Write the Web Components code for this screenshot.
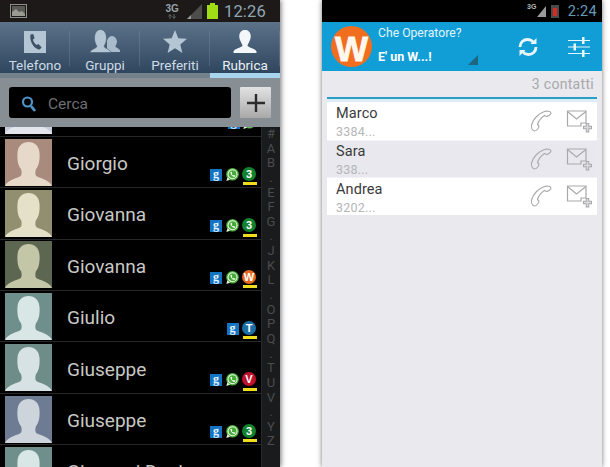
<!DOCTYPE html>
<html>
<head>
<meta charset="utf-8">
<style>
  html, body { margin: 0; height: 467px; overflow: hidden; background: #fff; font-family: Roboto, "Liberation Sans", sans-serif; }
  .page { display: flex; gap: 42px; height: 467px; }
</style>
</head>
<body>
<div class="page">
  <samsung-phone>
    <samsung-tab label="Telefono" icon="phone"></samsung-tab>
    <samsung-tab label="Gruppi" icon="group"></samsung-tab>
    <samsung-tab label="Preferiti" icon="star"></samsung-tab>
    <samsung-tab label="Rubrica" icon="person" active></samsung-tab>
    <contact-row slot="rows" name="" bg="#c9ccdc" fg="#e4e6ee" badges="g,wa"></contact-row>
    <contact-row slot="rows" name="Giorgio" bg="#a98b7d" fg="#e6d9ca" badges="g,wa,3"></contact-row>
    <contact-row slot="rows" name="Giovanna" bg="#928e70" fg="#e5e0c8" badges="g,wa,3"></contact-row>
    <contact-row slot="rows" name="Giovanna" bg="#5d6650" fg="#c4c6a8" badges="g,wa,W"></contact-row>
    <contact-row slot="rows" name="Giulio" bg="#6f8f8d" fg="#d8e6e6" badges="g,T"></contact-row>
    <contact-row slot="rows" name="Giuseppe" bg="#6e8c88" fg="#d6e2e4" badges="g,wa,V"></contact-row>
    <contact-row slot="rows" name="Giuseppe" bg="#6d7c92" fg="#ced4dc" badges="g,wa,3"></contact-row>
    <contact-row slot="rows" name="Giovanni Dani" bg="#6f8f8d" fg="#d8e6e6" badges=""></contact-row>
  </samsung-phone>
  <wo-phone>
    <wo-contact name="Marco" num="3384..."></wo-contact>
    <wo-contact name="Sara" num="338..." alt></wo-contact>
    <wo-contact name="Andrea" num="3202..."></wo-contact>
  </wo-phone>
</div>

<script>
const TAB_ICONS = {
  phone: `<svg width="22" height="22" viewBox="0 0 22 22"><rect width="22" height="22" fill="#b4c5d3"/><path d="M6.5 3.5 L9.2 3 L10.6 7.2 L8.9 8.6 C9.3 10.6 10.6 12.6 12.4 14 L14.3 13 L17.6 16.2 L15.8 18.6 C11.4 18.8 5 11.6 6.5 3.5Z" fill="#3c5165"/></svg>`,
  group: `<svg width="30" height="24" viewBox="0 0 30 24"><path d="M17 12.5c0-2 2-5.500 5-5.500s5 3.500 5 5.500c0 2.500-1.500 4-1.700 5 .3 1 3.700 1.500 4.700 4v1.500H17z" fill="#a9bccb"/><path d="M0 23.500c.5-3.500 5.500-3.500 7-6-.2-1-2.500-3.500-2.500-8.500C4.500 4 7 .5 10.500.5S16.500 4 16.500 9c0 5-2.300 7.500-2.500 8.500 1.500 2.500 6 2.500 7 6z" fill="#b4c5d3" stroke="#465c72" stroke-width=".6"/></svg>`,
  star: `<svg width="24" height="23" viewBox="0 0 24 23"><path d="M12 0l3.300 8.200 8.700.6-6.700 5.600 2.100 8.600L12 18.300 4.600 23l2.100-8.600L0 8.800l8.700-.6z" fill="#b4c5d3"/></svg>`,
  person: `<svg width="24" height="23" viewBox="0 0 24 23"><path d="M.5 23V21.500C1 19 7 18 9.500 16C9.500 14.500 8 12.500 7 10C6.300 8 6.200 7 6.300 5.500C6.500 2 9 0 12 0S17.500 2 17.700 5.500C17.800 7 17.700 8 17 10C16 12.500 14.500 14.500 14.500 16C17 18 23 19 23.500 21.500V23Z" fill="#f4f7f9"/></svg>`
};

class SamsungTab extends HTMLElement {
  constructor() {
    super();
    this.attachShadow({ mode: 'open' });
    this.shadowRoot.innerHTML = `
      <style>
        :host { flex: 1; display: flex; flex-direction: column; align-items: center; height: 51px; position: relative; font-size: 13.500px; color: #cfdbe4; }
        :host([active]) { color: #e8f0f5; }
        :host(:not(:last-child))::after { content: ""; position: absolute; right: 0; top: 9px; bottom: 7px; width: 1px; background: rgba(130,155,178,.3); }
        .icon { height: 30px; display: flex; align-items: flex-end; margin-top: 1px; }
        .label { margin-top: 4px; line-height: 16px; }
        svg { display: block; }
      </style>
      <div class="icon">${TAB_ICONS[this.getAttribute('icon')]}</div>
      <div class="label">${this.getAttribute('label')}</div>`;
  }
}
customElements.define('samsung-tab', SamsungTab);

class OpBadge extends HTMLElement {
  constructor() {
    super();
    this.attachShadow({ mode: 'open' });
    const kind = this.getAttribute('kind');
    const colors = { 3: '#12822e', W: '#e4681e', T: '#1b6ea6', V: '#c0122c' };
    let inner;
    if (kind === 'g') {
      inner = `<div class="g">g</div>`;
    } else if (kind === 'wa') {
      inner = `<svg width="13" height="13" viewBox="0 0 13 13"><circle cx="6.500" cy="6.300" r="6.300" fill="#45aa35"/><path d="M.3 13l1.200-3.700 2.500 2.500z" fill="#e6f4de"/><circle cx="6.500" cy="6.300" r="4.500" fill="#45aa35" stroke="#eef8e8" stroke-width="1.100"/><path d="M4.500 3.900l1.100-.2.700 1.600-.7.700c.3.700.9 1.300 1.600 1.600l.7-.7 1.500.8-.3 1.100c-2.300.4-5-2.500-4.600-4.900z" fill="#fff"/></svg>`;
    } else {
      inner = `<div class="op" style="background:${colors[kind]}">${kind}</div><div class="bar"></div>`;
    }
    this.shadowRoot.innerHTML = `
      <style>
        :host { display: block; position: relative; width: 14px; height: 14px; }
        :host([kind="g"]) { width: 12px; height: 12px; }
        :host([kind="wa"]) { width: 13px; height: 13px; }
        svg { display: block; }
        .g { width: 12px; height: 12px; background: #1474c4; color: #e6f2fb; font: 700 12px/10px "Liberation Serif", serif; text-align: center; }
        .op { width: 14px; height: 14px; border-radius: 50%; color: #fff; font: 900 11px/14px "Liberation Sans", sans-serif; text-align: center; }
        .bar { position: absolute; left: .5px; top: 15.500px; width: 14.500px; height: 3px; background: #f0dc1e; }
      </style>
      ${inner}`;
  }
}
customElements.define('op-badge', OpBadge);

class ContactRow extends HTMLElement {
  constructor() {
    super();
    this.attachShadow({ mode: 'open' });
    const badges = this.getAttribute('badges').split(',').filter(Boolean);
    this.shadowRoot.innerHTML = `
      <style>
        :host { display: flex; align-items: center; height: 50.4px; padding-left: 4.5px; border-bottom: 1px solid #26282a; position: relative; }
        svg { display: block; flex: none; }
        .name { margin-left: 15.500px; padding-top: 3px; font-size: 19px; color: #c8c8c5; white-space: nowrap; }
        .badges { position: absolute; right: 5px; bottom: 6.500px; display: flex; gap: 3.500px; align-items: flex-end; }
        op-badge { flex: none; }
      </style>
      <svg width="47" height="47" viewBox="0 0 47 47">
        <rect width="47" height="47" fill="${this.getAttribute('bg')}"/>
        <path d="M0 47C2 42 9 40 15 37.500C17 36.500 17 33 16 30C13 27 12 20 12.500 14C13 7 17 3 23.500 3C30 3 34 7 34.500 14C35 20 34 27 31 30C30 33 30 36.500 32 37.500C38 40 45 42 47 47Z" fill="${this.getAttribute('fg')}"/>
      </svg>
      <div class="name">${this.getAttribute('name')}</div>
      <div class="badges">${badges.map(b => `<op-badge kind="${b}"></op-badge>`).join('')}</div>`;
  }
}
customElements.define('contact-row', ContactRow);

class IndexBar extends HTMLElement {
  constructor() {
    super();
    this.attachShadow({ mode: 'open' });
    const letters = '# A B . E F G . J K L . O P Q . T U V . Y Z'.split(' ');
    this.shadowRoot.innerHTML = `
      <style>
        :host { display: block; width: 18px; flex: none; background: #1a1b1c; border-left: 1px solid #262829; font-size: 13px; color: #4a4c4d; text-align: center; }
        div { height: 14.650px; line-height: 14.650px; }
      </style>
      ${letters.map(l => `<div>${l}</div>`).join('')}`;
  }
}
customElements.define('index-bar', IndexBar);

class SamsungPhone extends HTMLElement {
  constructor() {
    super();
    this.attachShadow({ mode: 'open' });
    this.shadowRoot.innerHTML = `
      <style>
        :host { display: flex; flex-direction: column; width: 280px; height: 467px; flex: none; background: #000; box-shadow: 1px 0 5px rgba(0,0,0,.55); overflow: hidden; }
        .status { height: 22px; flex: none; background: #1c1918; display: flex; align-items: center; padding: 0 14px 0 10px; color: #8fa7b5; }
        .spacer { flex: 1; }
        .time { font-size: 16.500px; margin-left: 6px; letter-spacing: .2px; }
        .g3 { font: 700 10px/11px "Liberation Sans", sans-serif; color: #97a3ab; margin-right: 8px; }
        .g3 svg { margin: 0 auto; }
        svg { display: block; }
        .tabs { display: flex; height: 51px; flex: none; background: linear-gradient(#5b7289, #2f465f); }
        .underline { height: 5px; flex: none; display: flex; background: #74818b; }
        .underline::after { content: ""; width: 70px; margin-left: auto; background: #a9d4ee; }
        .search { height: 49px; flex: none; box-sizing: border-box; padding: 9px; background: #878e94; display: flex; gap: 9px; }
        .box { flex: 1; background: #000; border-radius: 3px; display: flex; align-items: center; padding: 3px 0 0 12px; color: #6d6f70; font-size: 15.500px; gap: 11px; }
        .plus { width: 31px; background: linear-gradient(#e2e2e2, #a9a9a9); display: flex; align-items: center; justify-content: center; border-radius: 1px; }
        .body { flex: 1; display: flex; min-height: 0; }
        .list { flex: 1; min-width: 0; overflow: hidden; background: #000; }
        .scroll { margin-top: -41.500px; }
      </style>
      <div class="status">
        <svg width="17" height="14" viewBox="0 0 17 14"><rect x=".5" y=".5" width="16" height="13" fill="none" stroke="#8f8f8a"/><rect x="2" y="2" width="13" height="10" fill="#5a5a56"/><path d="M2 12 L2 8 L6 5 L9 8 L12 7 L15 10 L15 12Z" fill="#9a9a94"/></svg>
        <div class="spacer"></div>
        <div class="g3">3G<svg width="8" height="5" viewBox="0 0 8 5"><path d="M2 5V1M.5 2.500L2 .5L3.500 2.500M6 0V4M4.500 2.500L6 4.500L7.500 2.500" fill="none" stroke="#6c757b" stroke-width=".8"/></svg></div>
        <svg width="16" height="15" viewBox="0 0 16 15" style="margin-right:4px"><path d="M15 0V15H0Z" fill="#4d4d4b"/><path d="M4 15L0 15 4 11Z" fill="#9a9a98"/></svg>
        <svg width="11" height="16" viewBox="0 0 11 16"><rect x="3" y="0" width="5" height="2" fill="#9fdc15"/><rect y="2" width="11" height="14" fill="#9fdc15"/></svg>
        <div class="time">12:26</div>
      </div>
      <div class="tabs"><slot></slot></div>
      <div class="underline"></div>
      <div class="search">
        <div class="box">
          <svg width="16" height="16" viewBox="0 0 15 16"><circle cx="6" cy="6" r="4.500" fill="none" stroke="#4f94c4" stroke-width="2.200"/><path d="M9.500 10L13.500 15" stroke="#4f94c4" stroke-width="2.800"/></svg>
          <span>Cerca</span>
        </div>
        <div class="plus"><svg width="18" height="18" viewBox="0 0 18 18"><path d="M9 0V18M0 9H18" stroke="#2c2c2c" stroke-width="2.400"/></svg></div>
      </div>
      <div class="body">
        <div class="list"><div class="scroll"><slot name="rows"></slot></div></div>
        <index-bar></index-bar>
      </div>`;
  }
}
customElements.define('samsung-phone', SamsungPhone);

class WoContact extends HTMLElement {
  constructor() {
    super();
    this.attachShadow({ mode: 'open' });
    this.shadowRoot.innerHTML = `
      <style>
        :host { display: flex; align-items: center; height: 37.500px; background: #fff; padding-left: 9px; padding-right: 5px; }
        :host([alt]) { background: #e8e8ee; border-top: 1px solid #f3f3f6; border-bottom: 1px solid #f3f3f6; height: 36px; }
        .txt { flex: 1; padding-top: 4px; }
        .name { font-size: 14.500px; line-height: 17px; color: #3a3a3a; letter-spacing: .1px; }
        .num { font-size: 12.500px; line-height: 17px; color: #b6b6b9; letter-spacing: .2px; margin-top: 1px; }
        svg { display: block; flex: none; }
        .call { margin-right: 14px; }
      </style>
      <div class="txt"><div class="name">${this.getAttribute('name')}</div><div class="num">${this.getAttribute('num')}</div></div>
      <svg class="call" width="22" height="22" viewBox="0 0 22 22"><path d="M14.500 1.500C17.500 .5 20.500 1.500 21 3C21 4.500 18 6.500 16.500 6.500L14.500 5.500C11.500 7.500 8.500 11 7.500 14.500L9 16C9 18 6.500 21 4.500 21C2.500 20.500 1 18 1.500 15C3 9 8.500 3.500 14.500 1.500Z" fill="none" stroke="#a9a9ac" stroke-width="1.100"/></svg>
      <svg width="26" height="24" viewBox="0 0 26 24"><path d="M1.500 2H20V14H15V17H1.500Z" fill="none" stroke="#a9a9ac" stroke-width="1.200"/><path d="M1.500 2.500L10.500 10L20 2.500" fill="none" stroke="#a9a9ac" stroke-width="1.200"/><path d="M21.500 14V23.500M17 18.500H26" stroke="#a9a9ac" stroke-width="3.500"/><path d="M21.500 15V22.500M18 18.500H25" stroke="#dcdcde" stroke-width="1.500"/></svg>`;
  }
}
customElements.define('wo-contact', WoContact);

class WoPhone extends HTMLElement {
  constructor() {
    super();
    this.attachShadow({ mode: 'open' });
    this.shadowRoot.innerHTML = `
      <style>
        :host { display: flex; flex-direction: column; width: 280px; height: 467px; flex: none; background: #e9e9ee; box-shadow: 0 0 5px rgba(0,0,0,.55); }
        svg { display: block; flex: none; }
        .status { height: 22px; flex: none; background: #000; display: flex; align-items: center; justify-content: flex-end; gap: 5px; padding-right: 5px; color: #659ab8; font-size: 14.500px; letter-spacing: .3px; }
        .g3 { font: 700 7px/8px "Liberation Sans", sans-serif; color: #b8b8b8; margin-right: -5px; margin-top: -8px; }
        .head { height: 49px; flex: none; background: #119ed6; display: flex; align-items: center; color: #fff; padding-left: 9px; position: relative; }
        .logo { width: 41px; height: 41px; border-radius: 50%; background: #f26e1f; color: #fff8ee; font: 900 35px/46px "Liberation Sans", sans-serif; -webkit-text-stroke: .8px #fff8ee; text-align: center; flex: none; }
        .title { margin-left: 6px; flex: none; width: 103px; height: 49px; display: flex; flex-direction: column; }
        .t1 { font-size: 12.200px; line-height: 14px; margin-top: 4px; color: #e2f4fb; }
        .t2 { font-size: 12.500px; line-height: 14px; font-weight: 700; margin-top: 10px; }
        .tri { position: absolute; left: 146px; top: 33px; width: 0; height: 0; border-left: 10px solid transparent; border-bottom: 10px solid #1e6580; }
        .actions { display: flex; margin-left: auto; align-items: center; gap: 30px; padding-right: 13px; }
        .count { height: 26px; flex: none; box-sizing: border-box; text-align: right; padding: 5px 8px 0 0; font-size: 14px; line-height: 17px; color: #a8a8aa; letter-spacing: .3px; }
        .rule { height: 2px; flex: none; margin: 0 5px; background: #2a9fc8; }
        .glow { height: 3px; flex: none; margin: 0 5px; background: #dcedf6; }
        .rows { display: block; margin: 0 5px; }
      </style>
      <div class="status">
        <span class="g3">3G</span>
        <svg width="9" height="11" viewBox="0 0 9 11"><path d="M9 0V11H0Z" fill="#9a9a9a"/></svg>
        <svg width="8" height="13" viewBox="0 0 8 13"><rect width="8" height="13" fill="#4a4a4a"/><rect x="2" y="3" width="4" height="8" fill="#d42a20"/></svg>
        <span style="margin-left:4px">2:24</span>
      </div>
      <div class="head">
        <div class="logo">W</div>
        <div class="title"><div class="t1">Che Operatore?</div><div class="t2">E' un W...!</div></div>
        <div class="tri"></div>
        <div class="actions">
          <svg width="20" height="20" viewBox="0 0 20 20" fill="none" stroke="#e8f6fc" stroke-width="2.800"><path d="M2 10C2 5.500 5.500 2.500 9.500 2.500C12 2.500 14 3.500 15.500 5.500"/><path d="M18 10C18 14.500 14.500 17.500 10.500 17.500C8 17.500 6 16.500 4.500 14.500"/><path d="M18.500 1V7H12.500Z" fill="#e8f6fc" stroke="none"/><path d="M1.500 19V13H7.500Z" fill="#e8f6fc" stroke="none"/></svg>
          <svg width="22" height="22" viewBox="0 0 22 22" style="margin-right:-1px"><path d="M0 4.500H22M0 11H22M0 17.500H22" stroke="#e8f6fc" stroke-width="1.200"/><rect x="14" y="1" width="2.500" height="7" fill="#e8f6fc"/><rect x="5.500" y="7.500" width="2.500" height="7" fill="#e8f6fc"/><rect x="14" y="14" width="2.500" height="7" fill="#e8f6fc"/></svg>
        </div>
      </div>
      <div class="count">3 contatti</div>
      <div class="rule"></div>
      <div class="glow"></div>
      <div class="rows"><slot></slot></div>`;
  }
}
customElements.define('wo-phone', WoPhone);
</script>
</body>
</html>
